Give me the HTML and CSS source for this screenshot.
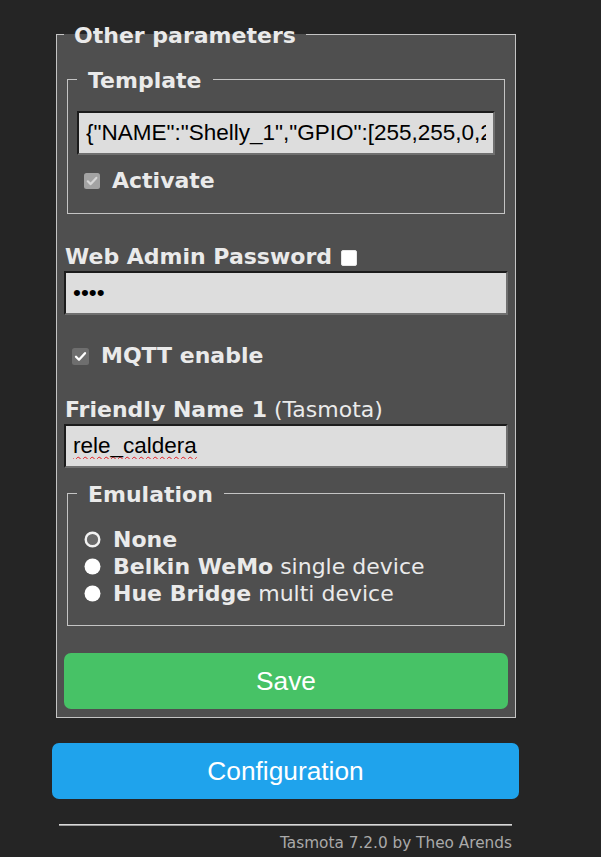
FILE: index.html
```html
<!DOCTYPE html>
<html lang="en">
<head>
<meta charset="utf-8">
<title>Tasmota - Other parameters</title>
<link rel="stylesheet" href="styles.css">
</head>
<body>
<div class="wrap">
  <form class="form">
    <fieldset class="box outer">
      <legend class="lg">Other parameters</legend>
      <fieldset class="box inner tpl">
        <legend class="lg">Template</legend>
        <input class="field tplin" type="text" value='{"NAME":"Shelly_1","GPIO":[255,255,0,255,0,21,0,0,0,0,0,0,0],"FLAG":0,"BASE":46}'>
        <label class="chk act">
          <svg class="cb" width="16" height="16" viewBox="0 0 16 16"><rect x="0" y="0" width="16" height="16" rx="2.5" fill="#a3a3a3"/><path d="M3.8 8.3 L6.7 11.1 L12.3 4.9" fill="none" stroke="#d6d6d6" stroke-width="2.2" stroke-linecap="round" stroke-linejoin="round"/></svg>
          <b>Activate</b>
        </label>
      </fieldset>

      <div class="lbl pw"><b>Web Admin Password</b>
        <svg class="cbw" width="16" height="16" viewBox="0 0 16 16"><rect x="0.5" y="0.5" width="15" height="15" rx="1.5" fill="#ffffff" stroke="#e6e6e6"/></svg>
      </div>
      <input class="field" type="password" value="1234">

      <label class="chk mqtt">
        <svg class="cb" width="17" height="17" viewBox="0 0 17 17"><rect x="0" y="0" width="17" height="17" rx="2.5" fill="#6e6e6e"/><path d="M4 8.8 L7 11.8 L13 5.2" fill="none" stroke="#ffffff" stroke-width="2.3" stroke-linecap="round" stroke-linejoin="round"/></svg>
        <b>MQTT enable</b>
      </label>

      <div class="lbl fn"><b>Friendly Name 1</b> (Tasmota)</div>
      <input class="field spell" type="text" value="rele_caldera">

      <fieldset class="box inner emu">
        <legend class="lg">Emulation</legend>
        <label class="rad">
          <svg class="rd" width="17" height="17" viewBox="0 0 17 17"><circle cx="8.5" cy="8.5" r="6.8" fill="#6a6a6a" stroke="#f2f2f2" stroke-width="2.4"/></svg>
          <b>None</b>
        </label>
        <label class="rad">
          <svg class="rd" width="17" height="17" viewBox="0 0 17 17"><circle cx="8.5" cy="8.5" r="8" fill="#ffffff"/></svg>
          <span><b>Belkin WeMo</b> single device</span>
        </label>
        <label class="rad">
          <svg class="rd" width="17" height="17" viewBox="0 0 17 17"><circle cx="8.5" cy="8.5" r="8" fill="#ffffff"/></svg>
          <span><b>Hue Bridge</b> multi device</span>
        </label>
      </fieldset>

      <button type="button" class="btn save">Save</button>
    </fieldset>
  </form>

  <button type="button" class="btn cfg">Configuration</button>

  <div class="foot">
    <hr class="rule">
    <span class="ver">Tasmota 7.2.0 by Theo Arends</span>
  </div>
</div>
</body>
</html>
```

FILE: styles.css
```css
html, body {
  margin: 0;
  padding: 0;
  background: #252525;
}

body {
  color: #eaeaea;
  font-family: "DejaVu Sans", Verdana, sans-serif;
  font-size: 22px;
}

.wrap {
  margin-left: 52px;
  width: 467px;
  padding-top: 20px;
}

.form {
  margin: 0;
}

.box {
  background: #4f4f4f;
  border: 1px solid #c4c4c4;
  margin: 0;
  min-width: 0;
}

.outer {
  margin: 0 3px 0 4px;
  padding: 17px 7px 8px 7px;
}

.inner {
  margin: 0 3px;
  padding: 0 9px;
}

.lg {
  padding: 4px 11px 0 11px;
  font-weight: bold;
  font-size: 22px;
  line-height: 24px;
}

.outer > .lg {
  padding: 4px 10px 0 10px;
}

.tpl {
  padding-top: 18px;
  padding-bottom: 19px;
}

.field {
  display: block;
  box-sizing: border-box;
  width: 100%;
  height: 44px;
  margin: 0;
  padding: 0 7px;
  background: #dddddd;
  color: #000000;
  font-family: "Liberation Sans", Arial, sans-serif;
  font-size: 22.5px;
  border-style: solid;
  border-width: 2px;
  border-color: #1c1c1c #6f6f6f #6f6f6f #1c1c1c;
  outline: none;
}

.spell {
  text-decoration: underline wavy #e4161c;
  text-decoration-thickness: 1px;
  text-underline-offset: 3px;
}

.chk, .rad {
  display: flex;
  align-items: center;
  line-height: 26px;
}

.chk b, .rad b {
  font-weight: bold;
}

.act {
  margin-top: 13px;
  margin-left: 7px;
  gap: 12px;
}

.mqtt {
  margin-top: 28px;
  margin-left: 8px;
  gap: 12px;
}

.lbl {
  line-height: 26px;
  margin-left: 1px;
  margin-bottom: 1px;
}

.pw {
  margin-top: 30px;
  display: flex;
  align-items: center;
  gap: 9px;
}

.fn {
  margin-top: 28px;
}

.cbw {
  margin-top: 1px;
}

.emu {
  margin-top: 11px;
  padding-top: 19px;
  padding-bottom: 18px;
}

.rad {
  line-height: 27px;
  margin-left: 7px;
  gap: 12px;
}

.btn {
  display: block;
  box-sizing: border-box;
  width: 100%;
  border: 0;
  border-radius: 7px;
  color: #ffffff;
  font-family: "Liberation Sans", Arial, sans-serif;
  font-size: 26.3px;
  height: 56px;
  padding: 0;
  cursor: pointer;
}

.save {
  background: #47c266;
  margin-top: 27px;
}

.cfg {
  background: #1fa3ec;
  margin-top: 25px;
}

.foot {
  text-align: right;
  margin: 0 7px 0 7px;
}

.rule {
  margin: 25px 0 0 0;
  height: 0;
  border: 0;
  border-top: 1px solid #d8d8d8;
  border-bottom: 1px solid #9a9a9a;
}

.ver {
  display: inline-block;
  color: #aaaaaa;
  font-size: 15.3px;
  line-height: 20px;
  margin-top: 7px;
}
```
